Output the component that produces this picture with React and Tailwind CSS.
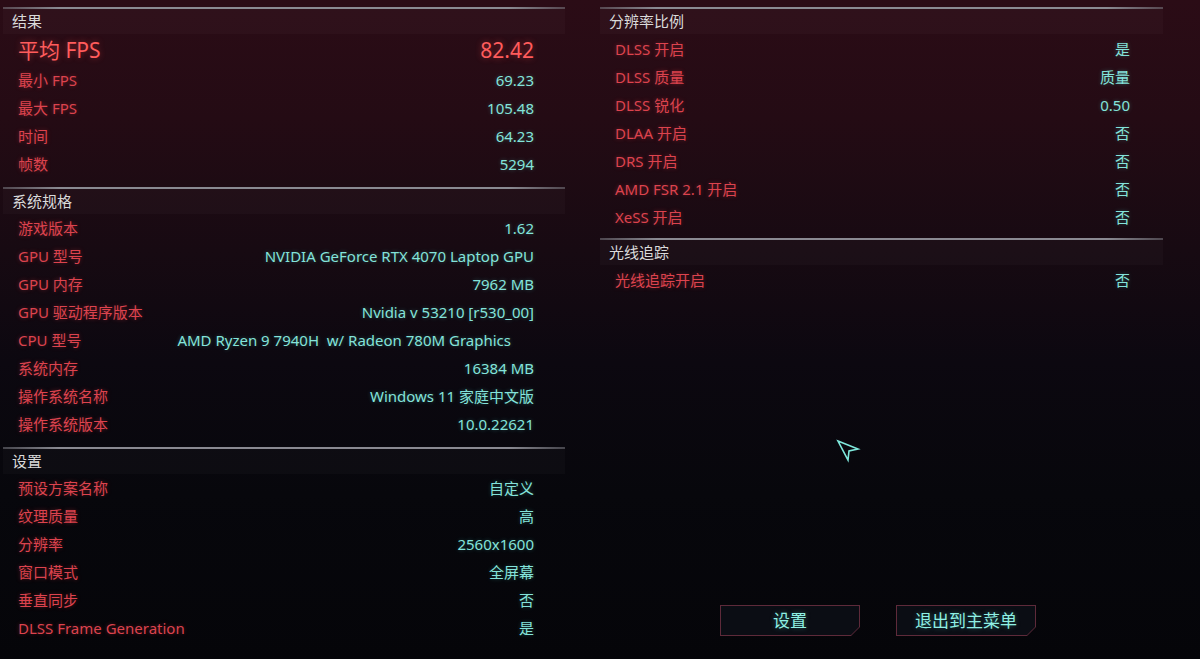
const results = [
  { label: "最小 FPS", value: "69.23" },
  { label: "最大 FPS", value: "105.48" },
  { label: "时间", value: "64.23" },
  { label: "帧数", value: "5294" },
];

const system = [
  { label: "游戏版本", value: "1.62" },
  { label: "GPU 型号", value: "NVIDIA GeForce RTX 4070 Laptop GPU" },
  { label: "GPU 内存", value: "7962 MB" },
  { label: "GPU 驱动程序版本", value: "Nvidia v 53210 [r530_00]" },
  { label: "CPU 型号", value: "AMD Ryzen 9 7940H  w/ Radeon 780M Graphics", shift: true },
  { label: "系统内存", value: "16384 MB" },
  { label: "操作系统名称", value: "Windows 11 家庭中文版" },
  { label: "操作系统版本", value: "10.0.22621" },
];

const settings = [
  { label: "预设方案名称", value: "自定义" },
  { label: "纹理质量", value: "高" },
  { label: "分辨率", value: "2560x1600" },
  { label: "窗口模式", value: "全屏幕" },
  { label: "垂直同步", value: "否" },
  { label: "DLSS Frame Generation", value: "是" },
];

const scaling = [
  { label: "DLSS 开启", value: "是" },
  { label: "DLSS 质量", value: "质量" },
  { label: "DLSS 锐化", value: "0.50" },
  { label: "DLAA 开启", value: "否" },
  { label: "DRS 开启", value: "否" },
  { label: "AMD FSR 2.1 开启", value: "否" },
  { label: "XeSS 开启", value: "否" },
];

const rayTracing = [{ label: "光线追踪开启", value: "否" }];

function SectionHeader({ title }) {
  return (
    <div>
      <div className="h-[2px] bg-[linear-gradient(to_right,rgba(130,130,138,0.5),#8a8a92_10%,#8a8a92_90%,rgba(130,130,138,0.5))]" />
      <div className="h-[25px] flex items-center pl-[9px] bg-white/[0.025]">
        <span className="text-[15px] text-[#dadada] leading-none">{title}</span>
      </div>
    </div>
  );
}

function Row({ label, value, shift, right }) {
  return (
    <div
      className={
        "h-[28px] flex items-center justify-between pl-[15px] " +
        (right ? "pr-[33px]" : "pr-[31px]")
      }
    >
      <span className="text-[15px] text-[#dc434e] leading-none [text-shadow:0_0_4px_rgba(255,60,70,0.35)]">
        {label}
      </span>
      <span
        className={
          "text-[15px] text-[#84e3da] leading-none whitespace-pre [text-shadow:0_0_4px_rgba(90,240,225,0.3)] " +
          (shift ? "mr-[23px]" : "")
        }
      >
        {value}
      </span>
    </div>
  );
}

function CutButton({ children }) {
  return (
    <div className="w-[140px] h-[31px] p-px bg-[#5e2a3a] [clip-path:polygon(0_0,100%_0,100%_calc(100%-9px),calc(100%-9px)_100%,0_100%)]">
      <div className="w-full h-full flex items-center justify-center bg-[#0b0d14] [clip-path:polygon(0_0,100%_0,100%_calc(100%-8px),calc(100%-8px)_100%,0_100%)]">
        <span className="text-[17px] text-[#8ff0e4] leading-none [text-shadow:0_0_5px_rgba(90,240,225,0.35)]">
          {children}
        </span>
      </div>
    </div>
  );
}

export default function App() {
  return (
    <div
      className="relative w-[1200px] h-[659px] overflow-hidden flex gap-[35px] pt-[7px] pl-[3px] bg-[linear-gradient(to_bottom,#2b0c16_0%,#240b14_18%,#170a12_38%,#0c0810_55%,#07070c_75%,#050509_100%)]"
      style={{ fontFamily: '"Noto Sans", "Noto Sans CJK SC", sans-serif' }}
    >
      {/* left column */}
      <div className="w-[562px] flex flex-col">
        <SectionHeader title="结果" />
        <div className="h-[32px] flex items-center justify-between pl-[15px] pr-[31px]">
          <span className="text-[21px] text-[#ff5c5c] leading-none [text-shadow:0_0_6px_rgba(255,70,70,0.45)]">
            平均 FPS
          </span>
          <span className="text-[21px] text-[#ff5c5c] leading-none [text-shadow:0_0_6px_rgba(255,70,70,0.45)]">
            82.42
          </span>
        </div>
        {results.map((r) => (
          <Row key={r.label} {...r} />
        ))}

        <div className="mt-[9px]">
          <SectionHeader title="系统规格" />
        </div>
        {system.map((r) => (
          <Row key={r.label} {...r} />
        ))}

        <div className="mt-[9px]">
          <SectionHeader title="设置" />
        </div>
        {settings.map((r) => (
          <Row key={r.label} {...r} />
        ))}
      </div>

      {/* right column */}
      <div className="w-[563px] flex flex-col pb-[23px]">
        <SectionHeader title="分辨率比例" />
        <div className="pt-px">
          {scaling.map((r) => (
            <Row key={r.label} {...r} right />
          ))}
        </div>

        <div className="mt-[7px]">
          <SectionHeader title="光线追踪" />
        </div>
        <div className="pt-px">
          {rayTracing.map((r) => (
            <Row key={r.label} {...r} right />
          ))}
        </div>

        <div className="mt-auto flex gap-[36px] pl-[120px]">
          <CutButton>设置</CutButton>
          <CutButton>退出到主菜单</CutButton>
        </div>
      </div>

      {/* mouse cursor */}
      <svg className="absolute left-[836px] top-[439px]" width="26" height="24" viewBox="0 0 26 24">
        <polygon
          points="2,2 22,10 13,12 12,21"
          fill="none"
          stroke="#7fe8dc"
          strokeWidth="1.6"
          strokeLinejoin="miter"
        />
      </svg>
    </div>
  );
}
